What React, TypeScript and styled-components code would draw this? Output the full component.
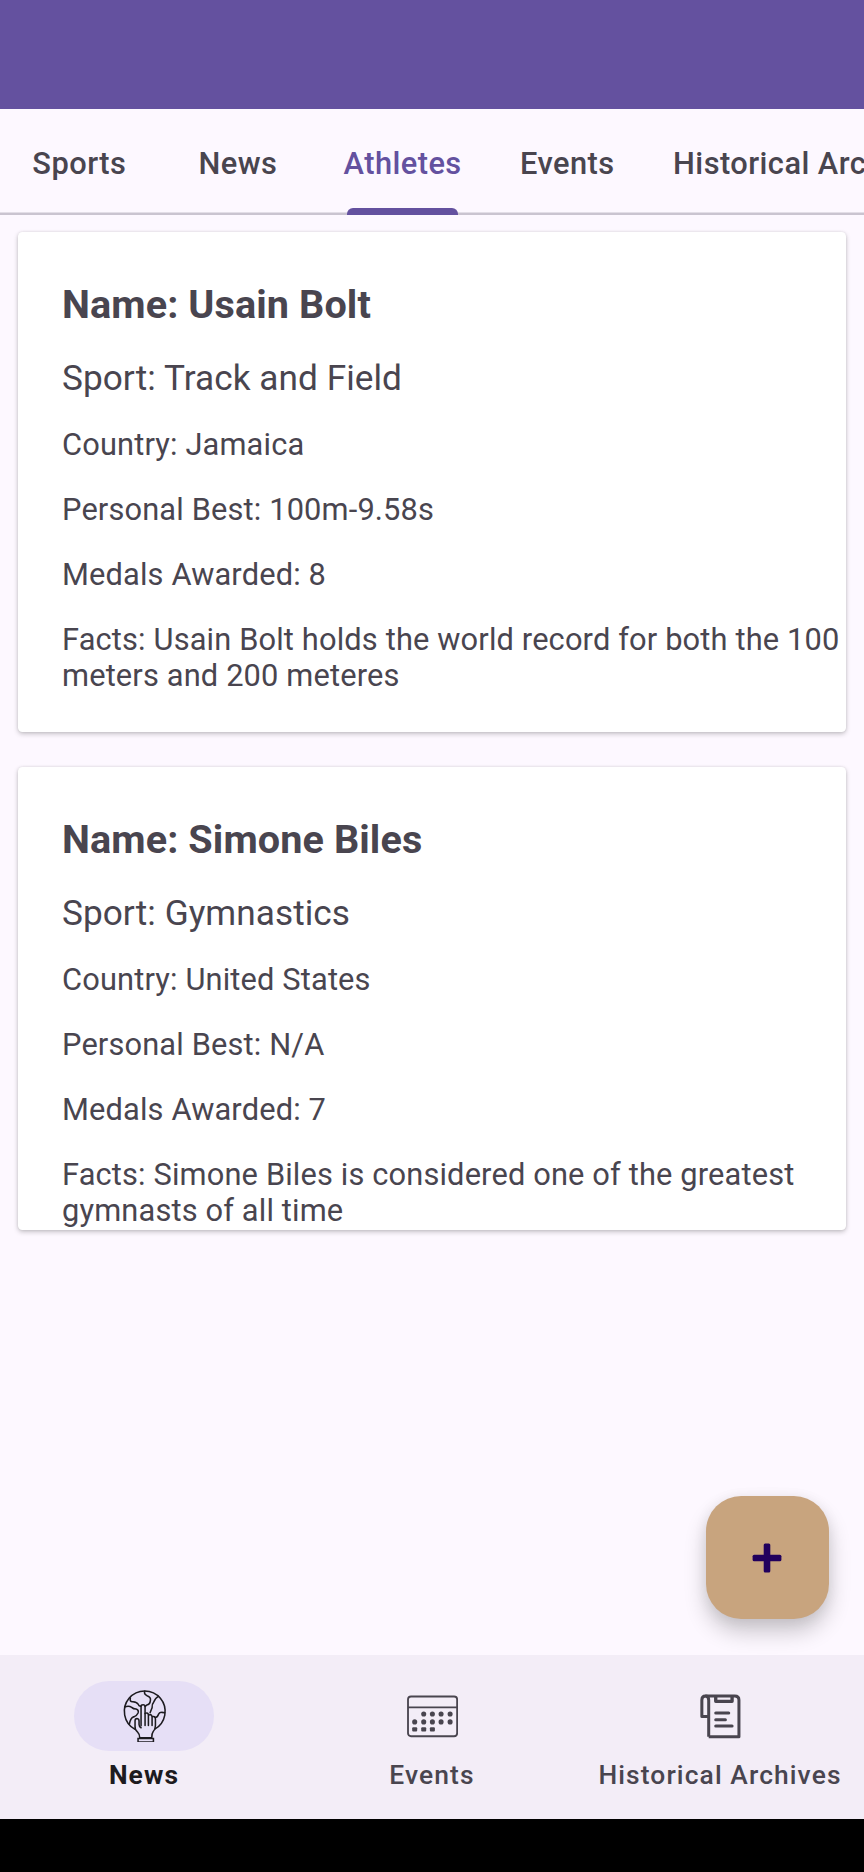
import React from 'react';
import styled, { createGlobalStyle } from 'styled-components';

const GlobalStyle = createGlobalStyle`
  * { box-sizing: border-box; }
  body {
    margin: 0;
    background: #fdf8ff;
    font-family: Roboto, sans-serif;
    color: #49454f;
    overflow: hidden;
  }
`;

const Screen = styled.div`
  position: relative;
  width: 864px;
  height: 1872px;
  display: flex;
  flex-direction: column;
  overflow: hidden;
  background: #fdf8ff;
`;

const StatusBar = styled.header`
  flex: none;
  height: 109px;
  background: #64519f;
`;

const TabBar = styled.nav`
  flex: none;
  display: flex;
  height: 105.5px;
  overflow: hidden;
  box-shadow: inset 0 -2.4px 0 #cac4d0;
`;

const Tab = styled.div<{ $active?: boolean }>`
  position: relative;
  flex: none;
  display: flex;
  align-items: center;
  justify-content: center;
  min-width: 158.6px;
  padding: 2.6px 26.4px 0;
  font-size: 30.8px;
  font-weight: 500;
  letter-spacing: 0.45px;
  white-space: nowrap;
  color: ${(p) => (p.$active ? '#64519f' : '#49454f')};
`;

const Indicator = styled.span`
  position: absolute;
  bottom: 0;
  left: 50%;
  width: 111px;
  height: 6.5px;
  margin-left: -55.5px;
  border-radius: 6px 6px 0 0;
  background: #64519f;
`;

const List = styled.main`
  flex: 1;
  display: flex;
  flex-direction: column;
  gap: 35px;
  padding: 17.5px 18px 0;
`;

const Card = styled.article<{ $height: number }>`
  flex: none;
  display: flex;
  flex-direction: column;
  gap: 28.2px;
  height: ${(p) => p.$height}px;
  padding: 50.3px 4px 0 44px;
  border-radius: 4.4px;
  background: #fff;
  overflow: hidden;
  box-shadow: 0 2px 5px rgba(0, 0, 0, 0.22), 0 0 3px rgba(0, 0, 0, 0.09);
`;

const Name = styled.h2`
  margin: 0;
  font-size: 39.6px;
  line-height: 46.4px;
  font-weight: 700;
  letter-spacing: 0.1px;
`;

const Sport = styled.p`
  margin: 0;
  padding-top: 1px;
  font-size: 35.2px;
  line-height: 41.3px;
  letter-spacing: 0.05px;
`;

const Detail = styled.p`
  margin: 0;
  font-size: 30.8px;
  line-height: 36.6px;
  letter-spacing: 0.15px;
`;

const Fab = styled.button`
  position: absolute;
  right: 35px;
  bottom: 252.8px;
  width: 123.2px;
  height: 123.2px;
  display: flex;
  align-items: center;
  justify-content: center;
  padding: 0;
  border: 0;
  border-radius: 35.2px;
  background: #c8a47e;
  box-shadow: 0 13px 22px rgba(0, 0, 0, 0.2), 0 2px 14px rgba(0, 0, 0, 0.07);
`;

const BottomNav = styled.nav`
  position: relative;
  flex: none;
  display: flex;
  height: 164.5px;
  background: #f3edf7;
`;

const NavItem = styled.div<{ $active?: boolean }>`
  flex: 1 0 0;
  display: flex;
  flex-direction: column;
  align-items: center;
  padding-top: 26.4px;
  font-size: 26.4px;
  line-height: 32px;
  letter-spacing: 1.1px;
  white-space: nowrap;
  font-weight: ${(p) => (p.$active ? 700 : 500)};
  color: ${(p) => (p.$active ? '#1d1b20' : '#49454f')};
`;

const Pill = styled.div<{ $active?: boolean }>`
  display: flex;
  align-items: center;
  justify-content: center;
  width: 140.8px;
  height: 70.4px;
  margin-bottom: 7.6px;
  border-radius: 36px;
  background: ${(p) => (p.$active ? '#e6dff6' : 'transparent')};
`;

const GestureBar = styled.footer`
  flex: none;
  height: 53px;
  background: #000;
`;

const Icon = styled.svg`
  width: 52.8px;
  height: 52.8px;
  fill: none;
  stroke: currentColor;
`;

const GlobeHandIcon = () => (
  <Icon viewBox="0 0 158 158" strokeWidth="4.6" strokeLinejoin="round" strokeLinecap="round">
    <path d="M50 117A61 61 0 1 1 110 117" />
    <path d="M80 4Q77 13 87 17Q99 21 97 31Q96 43 86 45L81 49" />
    <path d="M37 24Q34 36 45 35Q57 36 60 42Q63 50 69 48" />
    <path d="M20 51Q32 46 41 52Q46 57 54 57Q63 60 60 69Q56 78 48 80" />
    <path d="M34 102Q37 84 47 80" />
    <path d="M121 19Q112 23 107 36Q101 43 102 53L96 68" />
    <path d="M140 68L131 67Q124 66 121 73Q118 82 111 82" />
    <path d="M69 107V49Q69 44 75 44Q81 44 81 50V106" />
    <path d="M81 70Q91 66 91 76V106M91 75Q100 71 102 80V106M102 80Q111 77 112 86V106Q112 118 105 125Q101 130 101 143H65Q65 132 58 125Q50 119 51 108V92Q51 85 57 85Q63 86 63 93V103Q63 109 69 113" />
    <path d="M60 145H106V156H60Z" strokeLinejoin="miter" />
  </Icon>
);

const CalendarIcon = () => (
  <Icon viewBox="0 0 158 158" strokeWidth="5.5">
    <rect x="6" y="19.5" width="147" height="119" rx="9" />
    <path d="M6 52H153" />
    <g fill="currentColor" stroke="none">
      {[53, 79, 105, 132].map((x) => (
        <circle key={x} cx={x} cy="72" r="7.6" />
      ))}
      {[26, 53, 79, 105, 132].map((x) => (
        <circle key={x} cx={x} cy="95.5" r="7.6" />
      ))}
      {[26, 53, 79].map((x) => (
        <rect key={x} x={x - 7.5} y="111.5" width="15" height="13" rx="3" />
      ))}
    </g>
  </Icon>
);

const ArchiveIcon = () => (
  <Icon viewBox="0 0 158 158" strokeWidth="9" strokeLinejoin="round">
    <path d="M44 140V30Q44 18 34 18Q23.5 18 23.5 30V79H44" />
    <path d="M34 18H122Q134.500 18 134.500 30V140H44" />
    <path d="M65 18V34H114V18" strokeWidth="10" />
    <path d="M65 69H104M65 89H94M65 108H114" strokeLinecap="round" />
  </Icon>
);

const PlusIcon = () => (
  <svg width="30" height="30" viewBox="0 0 30 30" fill="#21005d">
    <rect x="0.6" y="11.7" width="28.8" height="6.6" rx="1.5" />
    <rect x="11.7" y="0.6" width="6.6" height="28.8" rx="1.5" />
  </svg>
);

const tabs = ['Sports', 'News', 'Athletes', 'Events', 'Historical Archives'];

const athletes = [
  {
    name: 'Usain Bolt',
    sport: 'Track and Field',
    country: 'Jamaica',
    best: '100m-9.58s',
    medals: 8,
    facts: 'Usain Bolt holds the world record for both the 100 meters and 200 meteres',
    height: 500,
  },
  {
    name: 'Simone Biles',
    sport: 'Gymnastics',
    country: 'United States',
    best: 'N/A',
    medals: 7,
    facts: 'Simone Biles is considered one of the greatest gymnasts of all time',
    height: 463,
  },
];

const destinations = [
  { label: 'News', icon: <GlobeHandIcon />, active: true },
  { label: 'Events', icon: <CalendarIcon />, active: false },
  { label: 'Historical Archives', icon: <ArchiveIcon />, active: false },
];

export default function App() {
  return (
    <Screen>
      <GlobalStyle />
      <StatusBar />
      <TabBar>
        {tabs.map((label) => (
          <Tab key={label} $active={label === 'Athletes'}>
            {label}
            {label === 'Athletes' && <Indicator />}
          </Tab>
        ))}
      </TabBar>
      <List>
        {athletes.map((a) => (
          <Card key={a.name} $height={a.height}>
            <Name>Name: {a.name}</Name>
            <Sport>Sport: {a.sport}</Sport>
            <Detail>Country: {a.country}</Detail>
            <Detail>Personal Best: {a.best}</Detail>
            <Detail>Medals Awarded: {a.medals}</Detail>
            <Detail>Facts: {a.facts}</Detail>
          </Card>
        ))}
      </List>
      <Fab aria-label="Add">
        <PlusIcon />
      </Fab>
      <BottomNav>
        {destinations.map((d) => (
          <NavItem key={d.label} $active={d.active}>
            <Pill $active={d.active}>{d.icon}</Pill>
            {d.label}
          </NavItem>
        ))}
      </BottomNav>
      <GestureBar />
    </Screen>
  );
}
